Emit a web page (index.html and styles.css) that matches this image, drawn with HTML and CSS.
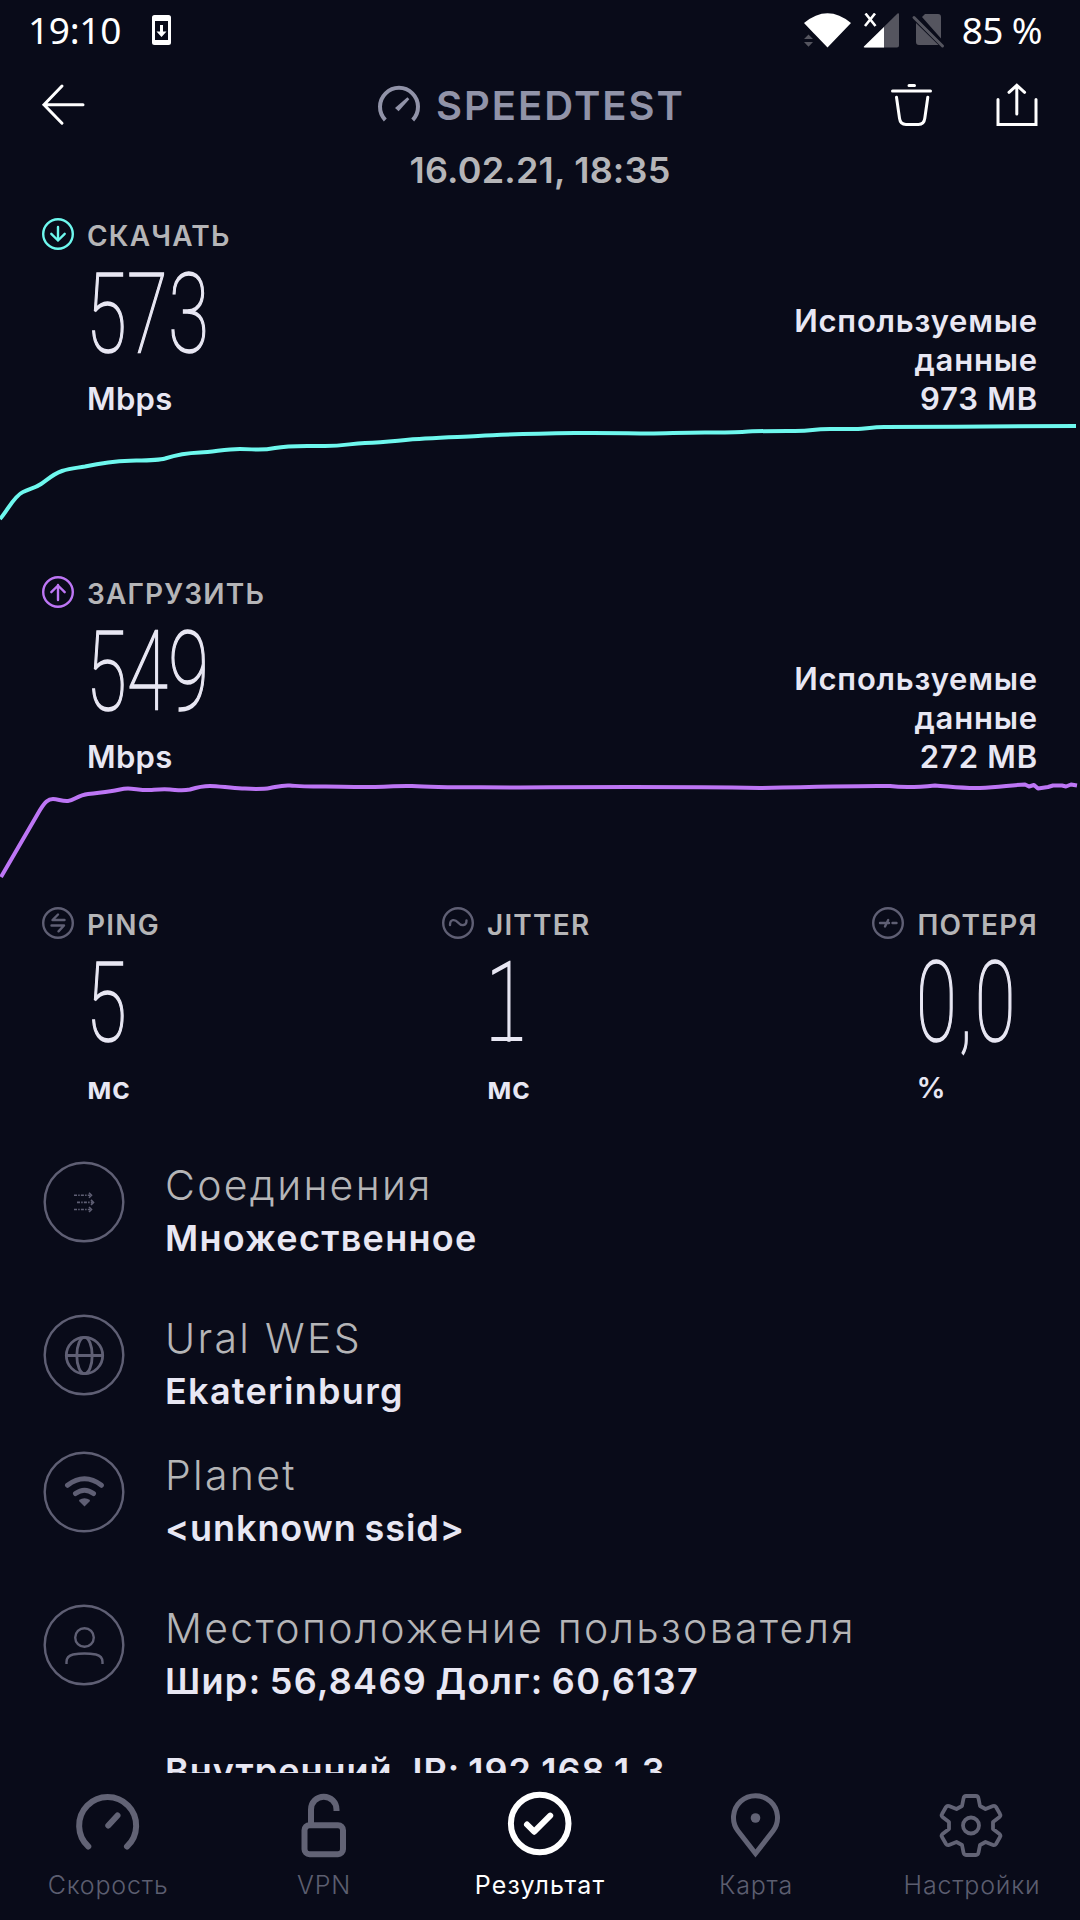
FILE: index.html
```html
<!DOCTYPE html>
<html lang="ru">
<head>
  <meta charset="UTF-8">
  <title>Speedtest</title>
  <link rel="stylesheet" href="styles.css">
</head>
<body>

  <div class="status">
    <span class="clock">19:10</span>
    <svg class="phone" width="20" height="32" viewBox="152 15 20 32">
      <path fill="#fff" fill-rule="evenodd" d="M154.500 16h14a2.500 2.500 0 0 1 2.500 2.500v25a2.500 2.500 0 0 1-2.500 2.500h-14a2.500 2.500 0 0 1-2.500-2.500v-25a2.500 2.500 0 0 1 2.500-2.500zM155 22v19h13v-19z"/>
      <path fill="#fff" d="M160 26h3v6.500h3.500l-5 5.500-5-5.500h3.500z"/>
    </svg>
    <div class="status-right">
      <svg width="48" height="36" viewBox="804 14 48 36">
        <path fill="#fff" d="M804 24q23.500-19.500 47 0l-23.500 24.500-12-12.500-2-2z"/>
        <path fill="#55555f" d="M804 40h9l-4.500-4.500zM804 43h9l-4.500 4.700z"/>
      </svg>
      <svg width="37" height="36" viewBox="862 14 37 36">
        <path fill="#55555f" d="M863 47.500l33.500-33q1.500-1 1.500 1v31q0 2-2 2h-32q-2 0-1-1z"/>
        <path fill="#fff" d="M883 28v20.500h-19q-2 0-1-1z"/>
        <path stroke="#fff" stroke-width="2.600" d="M864.500 14.500l10 12.500M874 14.500l-10 12.500"/>
      </svg>
      <svg width="34" height="36" viewBox="911 14 34 36">
        <path fill="#55555f" d="M922 18l3-3h13q3 0 3 3v21.500zM916 24l22.500 22h-19.500q-3 0-3-3z"/>
        <path stroke="#55555f" stroke-width="3" stroke-linecap="round" d="M914 18.500l28.500 28.500"/>
      </svg>
      <span class="battery">85 %</span>
    </div>
  </div>

  <header class="header">
    <svg class="back" width="44" height="44" viewBox="41 83 44 44">
      <path d="M83 104.700H44M62 86L44 104.700l18 18.500"/>
    </svg>
    <div class="brand">
      <svg width="44" height="40" viewBox="377 83 44 40">
        <path class="arc" d="M385.300 118a19 19 0 1 1 27.400 0"/>
        <path class="needle" d="M395 106l12.400-10.700 1.900 1.900-10.700 12z"/>
      </svg>
      <span>SPEEDTEST</span>
    </div>
    <div class="actions">
      <svg width="42" height="44" viewBox="891 83 42 44">
        <path d="M892.500 91h38M909 85.400h5.500M896.500 97.300l3 21q.8 6.200 6.500 6.200h12.500q5.500 0 6.300-6.200l3-21"/>
      </svg>
      <svg width="42" height="44" viewBox="995.500 83 42 44">
        <path d="M997.500 99.500v25h38v-25M1016.300 114V86M1008.500 92.300l7.800-7 7.800 7"/>
      </svg>
    </div>
  </header>
  <div class="date">16.02.21, 18:35</div>

  <section class="speed download">
    <div class="label">
      <svg width="34" height="34" viewBox="41 217 34 34">
        <circle cx="58" cy="234" r="14.800"/><path d="M58 227v13.500M51.300 233.800l6.700 6.700 6.700-6.700"/>
      </svg>
      <span>СКАЧАТЬ</span>
    </div>
    <div class="speed-row">
      <div class="metric">
        <div class="value">573</div>
        <div class="unit">Mbps</div>
      </div>
      <div class="data">Используемые<br>данные<br>973 MB</div>
    </div>
    <svg class="chart" width="1080" height="110" viewBox="0 418 1080 110">
      <path d="M0 519C8 510 14 496 23 492S35 488 41 484 53 474 62 471 77 468 85 466.500C105 462 115 461 130 460.700S158 460.500 165 458.500C176 455 186 453 200 452.500S225 449 240 449 260 451 275 448 305 446 325 446 350 443.500 365 443C390 442 400 440 425 438.500S460 437 478 436C510 434 540 433.500 575 433S630 433.500 649 433.500 680 432.500 705 432.500 735 432.500 745 431.700 775 431 795 431 810 429 830 429H858C866 428.500 874 427 884 427 950 427 1000 426 1076 426"/>
    </svg>
  </section>

  <section class="speed upload">
    <div class="label">
      <svg width="34" height="34" viewBox="41 575 34 34">
        <circle cx="58" cy="592" r="14.800"/><path d="M58 600v-15M51.300 592.200l6.700-6.700 6.700 6.700"/>
      </svg>
      <span>ЗАГРУЗИТЬ</span>
    </div>
    <div class="speed-row">
      <div class="metric">
        <div class="value">549</div>
        <div class="unit">Mbps</div>
      </div>
      <div class="data">Используемые<br>данные<br>272 MB</div>
    </div>
    <svg class="chart" width="1080" height="110" viewBox="0 776 1080 110">
      <path d="M1 877L40 810C45 802 48 799 53 799S62 801.500 68 801 78 795 88 794 105 792 112 791 122 788.500 128 788.500 142 790.500 150 790 162 789 170 789.500 182 791 190 789.500C198 787 202 786 210 786S230 788 242 788.500 262 789.500 270 788 282 785 290 785.500 305 787 320 786.500 350 787.500 375 787C395 786.500 400 785.500 412 786 440 788 480 787 520 787.500 600 787 700 787 760 788 820 786.500 870 785.500 890 786 905 788 920 787 935 785.500 950 786.500 962 788.500 980 788C1000 787 1012 785 1025 784.500L1029 786.500 1034 785 1038 788.500 1048 787 1053 785.500 1062 785.500 1066 786.500 1071 784.500 1077 785.500"/>
    </svg>
  </section>

  <section class="stats">
    <div class="stat">
      <div class="label">
        <svg width="34" height="34" viewBox="41 906 34 34">
          <circle cx="58" cy="923" r="14.800"/><path d="M64.500 920H52.500L58 914.500M51.500 925.500H64L58.500 931.300"/>
        </svg>
        <span>PING</span>
      </div>
      <div class="metric">
        <div class="value">5</div>
        <div class="unit">мс</div>
      </div>
    </div>
    <div class="stat">
      <div class="label">
        <svg width="34" height="34" viewBox="440 906 34 34">
          <circle cx="457" cy="923" r="14.800"/><path d="M449 925c0-6 5-6 8-2.500s8.500 4 8.500-2"/>
        </svg>
        <span>JITTER</span>
      </div>
      <div class="metric">
        <div class="value one">1</div>
        <div class="unit">мс</div>
      </div>
    </div>
    <div class="stat">
      <div class="label">
        <svg width="34" height="34" viewBox="868 906 34 34">
          <circle cx="885" cy="923" r="14.800"/><path d="M877 923h5.500M882 926.500l3.200-6.500M885 923h1M889.500 923h4"/>
        </svg>
        <span>ПОТЕРЯ</span>
      </div>
      <div class="metric">
        <div class="value loss">0,0</div>
        <div class="unit percent">%</div>
      </div>
    </div>
  </section>

  <main class="details">
    <div class="row">
      <svg width="82" height="82" viewBox="43 1161 82 82">
        <circle cx="84" cy="1202" r="39.300"/>
        <path class="thin" stroke-dasharray="3 1.200 1.500 1.200" d="M74 1195.300h16M77 1202.400h15M74 1209.500h16"/>
        <path class="thin" d="M89 1192.800l2.500 2.500-2.500 2.500M91 1199.900l2.500 2.500-2.500 2.500M89 1207l2.500 2.500-2.500 2.500"/>
      </svg>
      <div>
        <div class="title">Соединения</div>
        <div class="sub">Множественное</div>
      </div>
    </div>
    <div class="row short">
      <svg width="82" height="82" viewBox="43 1314 82 82">
        <circle cx="84" cy="1355" r="39.300"/>
        <g class="mid"><circle cx="84.500" cy="1355.500" r="18.200"/><ellipse cx="84.500" cy="1355.500" rx="7.700" ry="18.200"/><path d="M66.500 1355.500h36"/></g>
      </svg>
      <div>
        <div class="title">Ural WES</div>
        <div class="sub">Ekaterinburg</div>
      </div>
    </div>
    <div class="row">
      <svg width="82" height="82" viewBox="43 1451 82 82">
        <circle cx="84" cy="1492" r="39.300"/>
        <path class="thick" d="M67.500 1485.300q17-13 34 0M75.500 1493.500q9-6.500 18 0"/>
        <path class="solid" d="M79 1500q5.500-3.500 11 0l-.5 1.500-5 5-5-5z"/>
      </svg>
      <div>
        <div class="title">Planet</div>
        <div class="sub ssid">&lt;unknown ssid&gt;</div>
      </div>
    </div>
    <div class="row">
      <svg width="82" height="82" viewBox="43 1604 82 82">
        <circle cx="84" cy="1645" r="39.300"/>
        <circle cx="84.500" cy="1637.500" r="9.300"/>
        <path d="M66.500 1664v-2q0-6 6.500-7.500 11.500-2 23 0 6.500 1.500 6.500 7.500v2"/>
      </svg>
      <div>
        <div class="title">Местоположение пользователя</div>
        <div class="sub">Шир: 56,8469 Долг: 60,6137</div>
        <div class="sub ip">Внутренний. IP: 192.168.1.3</div>
      </div>
    </div>
  </main>

  <nav class="nav">
    <div class="item">
      <svg width="72" height="72" viewBox="72 1789 72 72">
        <path d="M88.300 1846.500a28.500 28.500 0 1 1 38.700 0M108.300 1825.500l9.200-10"/>
      </svg>
      <span>Скорость</span>
    </div>
    <div class="item">
      <svg width="72" height="72" viewBox="288 1789 72 72">
        <rect x="304.500" y="1825.200" width="38.500" height="29" rx="5"/><path stroke-linecap="butt" d="M311 1824v-14.500a12.700 12.700 0 0 1 25.500 0v1.500"/>
      </svg>
      <span>VPN</span>
    </div>
    <div class="item active">
      <svg width="72" height="72" viewBox="504 1789 72 72">
        <circle cx="539.700" cy="1823.500" r="28.800"/><path d="M527 1824.500l7.200 7.200 16-16"/>
      </svg>
      <span>Результат</span>
    </div>
    <div class="item">
      <svg width="72" height="72" viewBox="720 1789 72 72">
        <path stroke-width="5" stroke-linejoin="miter" d="M755.500 1853.500l-17.500-22.500a22 22 0 1 1 35 0z"/><circle class="dot" cx="755.500" cy="1818" r="4.800"/>
      </svg>
      <span>Карта</span>
    </div>
    <div class="item">
      <svg width="72" height="72" viewBox="-35 -36.500 72 72">
        <g class="gear"><circle r="8"/><path d="M-5-29.500H5Q7-29.500 7.500-27L9-19.500 14.500-16.500 22-19.500Q24-20 25-18.500L29-11.500Q30-10 28.500-8.500L22-3.500V3.500L28.500 8.500Q30 10 29 11.500L25 18.500Q24 20 22 19.500L14.500 16.500 9 19.500 7.500 27Q7 29.500 5 29.500H-5Q-7 29.500-7.500 27L-9 19.500-14.500 16.500-22 19.500Q-24 20-25 18.500L-29 11.500Q-30 10-28.500 8.500L-22 3.500V-3.500L-28.500-8.500Q-30-10-29-11.500L-25-18.500Q-24-20-22-19.500L-14.500-16.500-9-19.500-7.500-27Q-7-29.500-5-29.500z"/></g>
      </svg>
      <span>Настройки</span>
    </div>
  </nav>

</body>
</html>
```
FILE: styles.css
```css
* {
  box-sizing: border-box;
}
body {
  margin: 0;
  width: 1080px;
  height: 1920px;
  overflow: hidden;
  display: flex;
  flex-direction: column;
  background: #090b19;
  color: #e8e7f3;
  font-family: Inter, "Noto Sans", sans-serif;
}
svg {
  display: block;
  flex: none;
  fill: none;
}

/* status bar */
.status {
  display: flex;
  align-items: center;
  height: 60px;
  padding: 0 38px 0 28px;
  color: #fff;
  font-family: "Noto Sans", sans-serif;
  font-size: 37px;
  line-height: 60px;
}
.clock {
  width: 124px;
  letter-spacing: -0.3px;
}
.status-right {
  display: flex;
  align-items: center;
  margin-left: auto;
  gap: 11px;
}
.status-right svg {
  margin-top: 2px;
}
.battery {
  margin-left: 6px;
  letter-spacing: -0.6px;
}

/* header */
.header {
  display: flex;
  align-items: center;
  height: 90px;
  padding: 0 42px 0 41px;
}
.header svg {
  stroke: #fff;
  stroke-width: 3;
  stroke-linecap: round;
}
.brand {
  display: flex;
  align-items: center;
  gap: 15px;
  margin-left: 292px;
  color: #9193a8;
  font-size: 40px;
  font-weight: 600;
  letter-spacing: 2px;
}
.brand .arc {
  stroke: #9193a8;
  stroke-width: 4;
  stroke-linecap: butt;
}
.brand .needle {
  fill: #9193a8;
  stroke: none;
}
.actions {
  display: flex;
  gap: 63px;
  margin-left: auto;
}
.date {
  height: 40px;
  line-height: 40px;
  text-align: center;
  color: #b5b5b8;
  font-size: 36px;
  font-weight: 600;
  letter-spacing: 0.2px;
}

/* download / upload */
.speed {
  margin-top: 26px;
}
.upload {
  margin-top: 46px;
}
.label {
  display: flex;
  gap: 12px;
  height: 40px;
  color: #b5b5b7;
  font-size: 28px;
  font-weight: 600;
  line-height: 40px;
  letter-spacing: 1.2px;
}
.speed .label {
  padding-left: 41px;
}
.label svg {
  margin-top: 1px;
  stroke: #5f5f74;
  stroke-width: 2.4;
  stroke-linecap: round;
  stroke-linejoin: round;
}
.download svg {
  stroke: #6ef8ee;
}
.upload svg {
  stroke: #bd76f5;
}
.speed-row {
  display: flex;
  justify-content: space-between;
  align-items: flex-end;
  padding: 0 42px 0 41px;
}
.metric {
  padding-left: 45px;
}
.value {
  width: 0;
  height: 116px;
  white-space: nowrap;
  font-family: Roboto, sans-serif;
  font-size: 111px;
  font-weight: 100;
  line-height: 116px;
  letter-spacing: 0.6px;
  transform: scaleX(0.67);
  transform-origin: left;
  -webkit-text-stroke: 1.5px #e8e7f3;
}
.loss {
  letter-spacing: 3px;
}
.unit {
  margin-top: 7px;
  padding-left: 1px;
  font-size: 31px;
  font-weight: 600;
  line-height: 39px;
  letter-spacing: 0.3px;
}
.percent {
  padding-left: 0;
  font-size: 29px;
}
.data {
  text-align: right;
  font-size: 31px;
  font-weight: 600;
  line-height: 39px;
  letter-spacing: 0.8px;
}
.chart {
  stroke-width: 4;
  stroke-linejoin: round;
}

/* ping, jitter, loss */
.stats {
  display: flex;
  justify-content: space-between;
  margin-top: 19px;
  padding: 0 42px 0 41px;
}
/* foot under the 1 */
.one::after {
  content: "";
  position: absolute;
  left: 8px;
  top: 92px;
  width: 46px;
  height: 4px;
  background: #e8e7f3;
}

/* details list */
.details {
  height: 666px;
  padding: 55px 0 0 43px;
  overflow: hidden;
}
.row {
  display: flex;
  gap: 40px;
  height: 153px;
  white-space: nowrap;
}
.row.short {
  height: 137px;
}
.row svg {
  margin-top: -1px;
  stroke: #5f5f74;
  stroke-width: 2.4;
}
.row .thin {
  stroke-width: 1.6;
}
.row .mid {
  stroke-width: 2.8;
}
.row .thick {
  stroke-width: 5;
  stroke-linecap: round;
}
.row .solid {
  fill: #5f5f74;
  stroke: none;
}
.title {
  color: #b5b5b7;
  font-size: 41px;
  font-weight: 300;
  line-height: 46px;
  letter-spacing: 2.3px;
}
.sub {
  font-size: 36px;
  font-weight: 600;
  line-height: 60px;
  letter-spacing: 1.3px;
  word-spacing: -2px;
}
.ssid {
  letter-spacing: 0.9px;
}
.ip {
  margin-top: 30px;
  letter-spacing: 1px;
}

/* bottom navigation */
.nav {
  display: flex;
  height: 147px;
  padding-top: 16px;
  color: #5c5e70;
}
.item {
  display: flex;
  flex-direction: column;
  align-items: center;
  width: 216px;
  font-size: 25px;
  font-weight: 300;
  line-height: 30px;
  letter-spacing: 0.8px;
}
.item svg {
  margin-bottom: 9px;
  stroke: #626375;
  stroke-width: 6;
  stroke-linecap: round;
  stroke-linejoin: round;
}
.item.active {
  color: #fff;
  font-weight: 400;
  letter-spacing: 1.1px;
}
.active svg {
  stroke: #fff;
}
.dot {
  fill: #626375;
  stroke: none;
}
.gear {
  stroke-width: 3.8;
}
```
